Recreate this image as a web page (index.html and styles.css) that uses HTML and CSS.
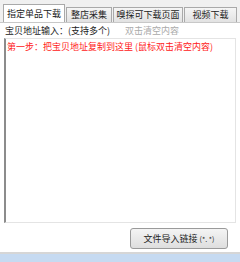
FILE: index.html
```html
<!DOCTYPE html>
<html lang="zh-CN">
<head>
    <meta charset="UTF-8">
    <title>宝贝下载</title>
    <link rel="stylesheet" href="styles.css">
</head>
<body>
    <!-- Tabs -->
    <div class="tabs">
        <div class="tab active tab-item">指定单品下载</div>
        <div class="tab tab-shop">整店采集</div>
        <div class="tab tab-sniff">嗅探可下载页面</div>
        <div class="tab tab-video">视频下载</div>
    </div>

    <!-- Tab content -->
    <div class="panel">
        <div class="label-row">
            <span>宝贝地址输入：(支持多个)</span>
            <span class="hint">双击清空内容</span>
        </div>
        <div class="url-box">第一步：把宝贝地址复制到这里 (鼠标双击清空内容)</div>
        <div class="button-row">
            <button class="import-btn">文件导入链接<small>(*. *)</small></button>
        </div>
    </div>

    <div class="status-bar"></div>
</body>
</html>
```

FILE: styles.css
```css
body {
    margin: 0;
    width: 240px;
    height: 262px;
    overflow: hidden;
    background-color: #fff;
    font-family: "Noto Sans CJK SC", "Liberation Sans", sans-serif;
    font-size: 9px;
    color: #222;
}

/* Tabs */
.tabs {
    height: 22px;
    padding-left: 3px;
    display: flex;
    align-items: flex-end;
    background-color: #f0f0f0;
    box-sizing: border-box;
}

.tab {
    height: 15px;
    line-height: 14px;
    margin-right: 1px;
    border: 1px solid #a9a9a9;
    border-bottom: none;
    background: linear-gradient(#f5f5f5, #e2e2e2);
    box-sizing: border-box;
    white-space: nowrap;
    text-align: center;
}

.tab.active {
    height: 18px;
    line-height: 17px;
    background: #fff;
}

.tab-item { width: 62px; }
.tab-shop { width: 46px; }
.tab-sniff { width: 70px; }
.tab-video { width: 53px; }

/* Panel */
.panel {
    height: 230px;
    padding: 0 4px;
    border-top: 1px solid #c8c8c8;
    box-sizing: border-box;
    display: flex;
    flex-direction: column;
}

.label-row {
    height: 15px;
    line-height: 15px;
    padding-left: 1px;
    display: flex;
    gap: 15px;
}

.hint {
    color: #aaa;
}

.url-box {
    height: 185px;
    width: 232px;
    padding: 2px 1px;
    border: 1px solid #e4e4e4;
    border-left: 2px solid #8c8c8c;
    color: #ff2020;
    line-height: 12px;
    box-sizing: border-box;
}

.button-row {
    display: flex;
    justify-content: flex-end;
    padding: 5px 8px 0 0;
}

.import-btn {
    width: 98px;
    height: 21px;
    padding: 0;
    border: 1px solid #9a9a9a;
    border-radius: 3px;
    background: linear-gradient(#f4f4f4, #dedede);
    font-family: inherit;
    font-size: 9px;
    color: #222;
}

.import-btn small {
    font-size: 7px;
    margin-left: 2px;
}

/* Status bar */
.status-bar {
    height: 10px;
    border-top: 2px solid #d6d6d6;
    background-color: #c6daf1;
    box-sizing: border-box;
}
```
